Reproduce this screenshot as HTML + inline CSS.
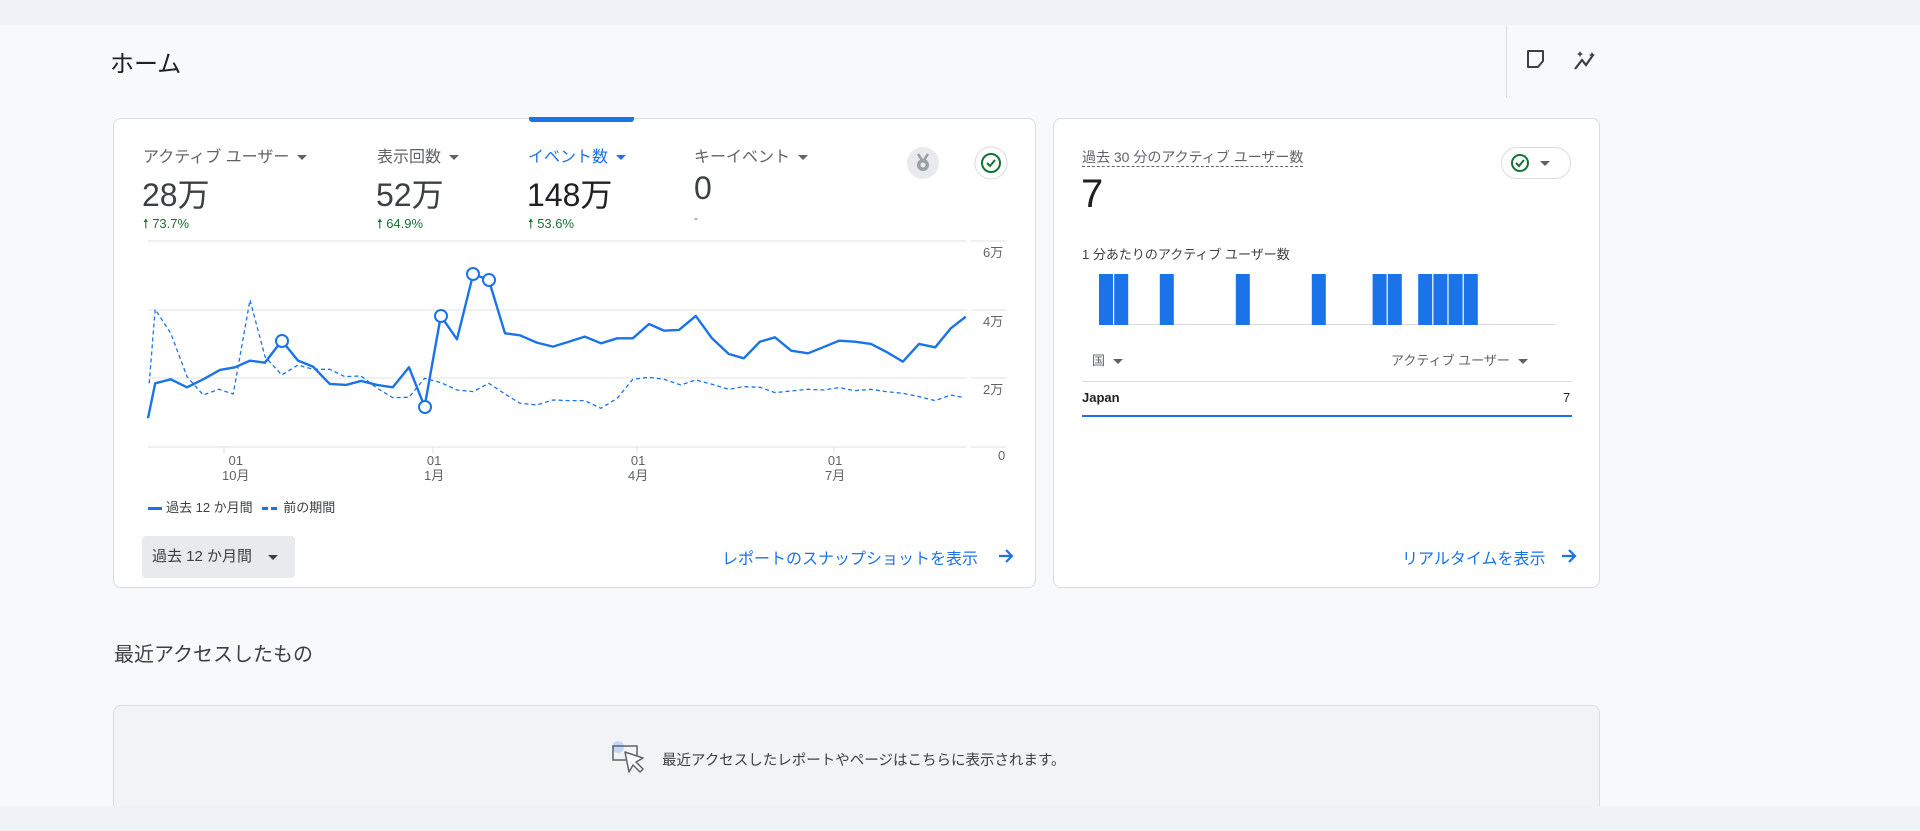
<!DOCTYPE html>
<html><head><meta charset="utf-8"><style>
*{box-sizing:border-box;margin:0;padding:0}
html,body{width:1920px;height:831px;overflow:hidden}
body{background:#f8f9fa;font-family:"Liberation Sans","Noto Sans CJK JP",sans-serif;position:relative;color:#3c4043}
.a{position:absolute;white-space:nowrap}
.card{position:absolute;background:#fff;border:1px solid #dadce0;border-radius:8px}
.tab{font-size:16px;color:#5f6368}
.val{font-size:32px;color:#3c4043}
.pct{font-size:13px;color:#137333}
.tri{display:inline-block;width:0;height:0;border-left:5px solid transparent;border-right:5px solid transparent;border-top:5px solid #5f6368;vertical-align:middle;margin-left:8px}
.ax{font-size:13px;color:#5f6368}
.link{font-size:16px;color:#1a73e8}
</style></head><body>
<div class="a" style="left:0;top:0;width:1920px;height:25px;background:#eff2f6"></div>
<div class="a" style="left:110px;top:44px;font-size:24px;color:#202124">ホーム</div>
<div class="a" style="left:1506px;top:25px;width:1px;height:73px;background:#dadce0"></div>
<svg class="a" style="left:1525px;top:48px" width="90" height="24" viewBox="0 0 90 24">
<path d="M3 3h15v10l-5 6H3z" fill="none" stroke="#3c4043" stroke-width="2" stroke-linejoin="round"/>
<path d="M50 21l7-9 4 5 7-10" fill="none" stroke="#3c4043" stroke-width="2.2"/>
<path d="M55 3l1 2 2 1-2 1-1 2-1-2-2-1 2-1zM67 4l1 2 2 1-2 1-1 2-1-2-2-1 2-1z" fill="#3c4043"/>
</svg>

<div class="card" style="left:113px;top:118px;width:923px;height:470px"></div>
<div class="a" style="left:529px;top:117px;width:105px;height:5px;background:#1a73e8;border-radius:0 0 3px 3px"></div>
<div class="a tab" style="left:143px;top:143px">アクティブ ユーザー<span class="tri"></span></div>
<div class="a tab" style="left:377px;top:143px">表示回数<span class="tri"></span></div>
<div class="a tab" style="left:528px;top:143px;color:#1a73e8">イベント数<span class="tri" style="border-top-color:#1a73e8"></span></div>
<div class="a tab" style="left:694px;top:143px">キーイベント<span class="tri"></span></div>
<div class="a val" style="left:142px;top:170px">28万</div>
<div class="a val" style="left:376px;top:170px">52万</div>
<div class="a val" style="left:527px;top:170px;color:#202124">148万</div>
<div class="a val" style="left:694px;top:170px">0</div>
<div class="a pct" style="left:143px;top:215px">🠕 73.7%</div>
<div class="a pct" style="left:377px;top:215px">🠕 64.9%</div>
<div class="a pct" style="left:528px;top:215px">🠕 53.6%</div>
<div class="a" style="left:694px;top:211px;font-size:12px;color:#5f6368">-</div>
<svg class="a" style="left:906px;top:146px" width="34" height="34"><circle cx="17" cy="17" r="16" fill="#e8eaed"/><path d="M12 8l4 6M22 8l-4 6" stroke="#9aa0a6" stroke-width="2.5"/><circle cx="17" cy="19" r="6" fill="#9aa0a6"/><circle cx="17" cy="19" r="2.5" fill="#e8eaed"/></svg>
<svg class="a" style="left:974px;top:146px" width="34" height="34"><circle cx="17" cy="17" r="16" fill="#fff" stroke="#dadce0"/><circle cx="17" cy="17" r="9" fill="none" stroke="#137333" stroke-width="2"/><path d="M13 17l3 3 5-6" fill="none" stroke="#137333" stroke-width="2"/></svg>

<svg class="a" style="left:0;top:0" width="1100" height="600">
<g stroke="#e0e0e0" stroke-width="1">
<line x1="148" y1="241" x2="967" y2="241"/><line x1="148" y1="310" x2="967" y2="310"/><line x1="148" y1="378" x2="967" y2="378"/><line x1="148" y1="447" x2="967" y2="447"/>
<line x1="971" y1="241" x2="1006" y2="241"/><line x1="971" y1="310" x2="1006" y2="310"/><line x1="971" y1="378" x2="1006" y2="378"/><line x1="971" y1="447" x2="1006" y2="447"/>
<line x1="224" y1="447" x2="224" y2="453"/><line x1="433" y1="447" x2="433" y2="453"/><line x1="637" y1="447" x2="637" y2="453"/><line x1="834" y1="447" x2="834" y2="453"/>
</g>
<g transform="translate(100,100) scale(0.6,0.3333)" fill="none" stroke="#1a73e8">
<polyline vector-effect="non-scaling-stroke" stroke-width="1.3" stroke-dasharray="4 3" points="82,850 92,628 118,700 145,830 172,885 198,868 222,882 250,600 275,770 303,825 330,795 355,808 383,808 408,830 435,828 462,865 488,893 515,892 541,835 568,848 595,870 622,875 648,850 675,882 700,910 728,915 755,900 782,902 808,902 835,925 862,895 888,838 915,832 940,838 968,855 993,840 1020,853 1048,868 1073,860 1100,862 1125,878 1152,873 1180,868 1205,870 1232,863 1258,872 1285,868 1310,875 1338,880 1365,890 1392,902 1418,885 1440,893"/>
<polyline vector-effect="non-scaling-stroke" stroke-width="2.4" stroke-linejoin="round" points="80,955 92,850 118,838 145,862 172,838 200,810 225,802 250,782 275,788 303,722 330,782 355,800 383,852 410,855 435,843 462,855 488,862 515,802 541,920 568,648 595,718 622,522 648,540 675,700 700,706 728,728 755,740 782,725 808,710 835,730 862,715 888,715 915,672 940,692 965,690 993,648 1020,715 1048,762 1073,775 1100,725 1125,712 1152,752 1180,760 1205,742 1232,722 1258,725 1285,732 1310,755 1338,785 1365,732 1392,742 1418,685 1443,650"/>
</g>
<g fill="#fff" stroke="#1a73e8" stroke-width="2">
<circle cx="282" cy="341" r="6"/><circle cx="425" cy="407" r="6"/><circle cx="441" cy="316" r="6"/><circle cx="473" cy="274" r="6"/><circle cx="489" cy="280" r="6"/>
</g>
</svg>
<div class="a ax" style="left:983px;top:242px">6万</div>
<div class="a ax" style="left:983px;top:311px">4万</div>
<div class="a ax" style="left:983px;top:379px">2万</div>
<div class="a ax" style="left:998px;top:448px">0</div>
<div class="a ax" style="left:222px;top:453px;text-align:center;line-height:15px">01<br>10月</div>
<div class="a ax" style="left:424px;top:453px;text-align:center;line-height:15px">01<br>1月</div>
<div class="a ax" style="left:628px;top:453px;text-align:center;line-height:15px">01<br>4月</div>
<div class="a ax" style="left:825px;top:453px;text-align:center;line-height:15px">01<br>7月</div>
<div class="a" style="left:148px;top:497px;font-size:13px;color:#3c4043"><span style="display:inline-block;width:14px;height:3px;background:#1a73e8;vertical-align:middle;margin-right:4px"></span>過去 12 か月間 <span style="display:inline-block;width:6px;height:3px;background:#1a73e8;vertical-align:middle;margin-left:6px"></span><span style="display:inline-block;width:6px;height:3px;background:#1a73e8;vertical-align:middle;margin:0 6px 0 3px"></span>前の期間</div>
<div class="a" style="left:142px;top:536px;width:153px;height:42px;background:#e8eaed;border-radius:4px;font-size:15px;color:#3c4043;line-height:42px;padding-left:10px">過去 12 か月間<span class="tri" style="margin-left:16px;border-top-color:#3c4043"></span></div>
<div class="a link" style="left:722px;top:545px">レポートのスナップショットを表示</div>
<svg class="a" style="left:997px;top:547px" width="18" height="18"><path d="M2 9h13M9 3l6 6-6 6" fill="none" stroke="#1a73e8" stroke-width="2.2"/></svg>

<div class="card" style="left:1053px;top:118px;width:547px;height:470px"></div>
<div class="a" style="left:1082px;top:148px;font-size:14px;color:#5f6368;border-bottom:1px dashed #5f6368;line-height:18px">過去 30 分のアクティブ ユーザー数</div>
<div class="a" style="left:1501px;top:147px;width:70px;height:32px;border:1px solid #dadce0;border-radius:16px"></div>
<svg class="a" style="left:1510px;top:153px" width="20" height="20"><circle cx="10" cy="10" r="8" fill="none" stroke="#137333" stroke-width="2"/><path d="M6 10l3 3 5-6" fill="none" stroke="#137333" stroke-width="2"/></svg>
<span class="a tri" style="left:1540px;top:161px;margin:0"></span>
<div class="a" style="left:1081px;top:172px;font-size:40px;color:#202124">7</div>
<div class="a" style="left:1082px;top:244px;font-size:13px;color:#3c4043">1 分あたりのアクティブ ユーザー数</div>
<svg class="a" style="left:1099px;top:274px" width="460" height="52">
<line x1="0" y1="50.5" x2="457" y2="50.5" stroke="#dadce0"/>
<g fill="#1a73e8">
<rect x="0" y="0" width="14" height="51"/><rect x="15.2" y="0" width="14" height="51"/><rect x="60.8" y="0" width="14" height="51"/><rect x="136.8" y="0" width="14" height="51"/><rect x="212.8" y="0" width="14" height="51"/><rect x="273.6" y="0" width="14" height="51"/><rect x="288.8" y="0" width="14" height="51"/><rect x="319.2" y="0" width="14" height="51"/><rect x="334.4" y="0" width="14" height="51"/><rect x="349.6" y="0" width="14" height="51"/><rect x="364.8" y="0" width="14" height="51"/>
</g></svg>
<div class="a" style="left:1092px;top:350px;font-size:13px;color:#5f6368">国<span class="tri"></span></div>
<div class="a" style="left:1391px;top:350px;font-size:13px;color:#5f6368">アクティブ ユーザー<span class="tri"></span></div>
<div class="a" style="left:1082px;top:381px;width:490px;height:1px;background:#dadce0"></div>
<div class="a" style="left:1082px;top:390px;font-size:13px;color:#202124;font-weight:bold">Japan</div>
<div class="a" style="left:1563px;top:390px;font-size:13px;color:#202124">7</div>
<div class="a" style="left:1082px;top:415px;width:490px;height:2px;background:#1a73e8"></div>
<div class="a link" style="left:1402px;top:545px">リアルタイムを表示</div>
<svg class="a" style="left:1560px;top:547px" width="18" height="18"><path d="M2 9h13M9 3l6 6-6 6" fill="none" stroke="#1a73e8" stroke-width="2.2"/></svg>

<div class="a" style="left:114px;top:638px;font-size:20px;color:#3c4043">最近アクセスしたもの</div>
<div class="a" style="left:113px;top:705px;width:1487px;height:101px;background:#f1f3f4;border:1px solid #dadce0;border-bottom:none;border-radius:8px 8px 0 0"></div>
<svg class="a" style="left:609px;top:740px" width="44" height="36"><circle cx="9" cy="7" r="6" fill="#aecbfa" opacity=".7"/><rect x="4" y="6" width="24" height="14" fill="none" stroke="#5f6368" stroke-width="1.5"/><path d="M16 12l4 20 4-7 7 7 3-3-7-7 7-4z" fill="#fff" stroke="#5f6368" stroke-width="1.5" stroke-linejoin="round"/></svg>
<div class="a" style="left:662px;top:749px;font-size:14.5px;color:#3c4043">最近アクセスしたレポートやページはこちらに表示されます。</div>
<div class="a" style="left:0;top:806px;width:1920px;height:25px;background:#eff2f6"></div>
</body></html>
